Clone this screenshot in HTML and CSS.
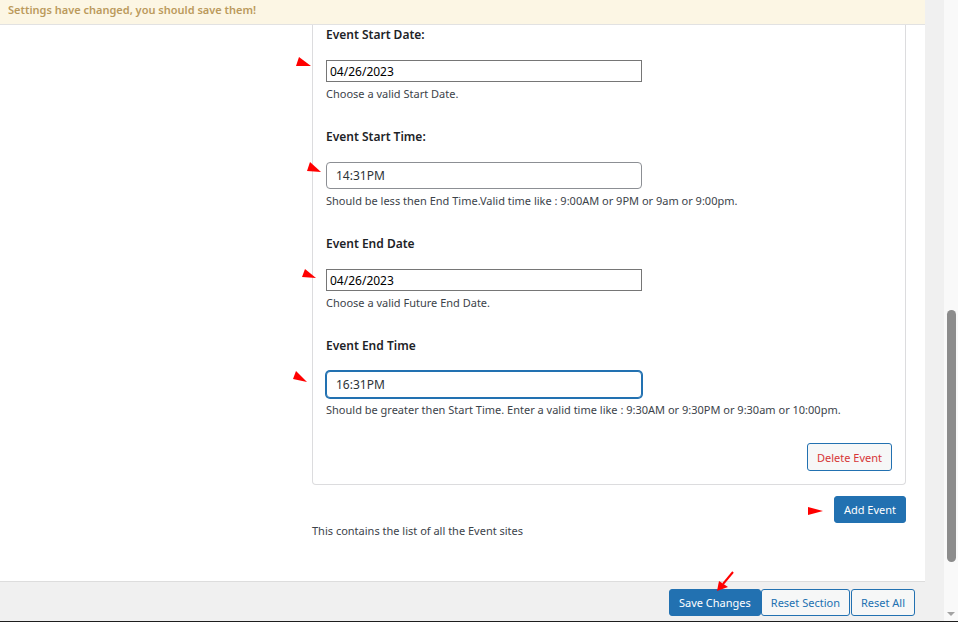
FILE: index.html
```html
<!DOCTYPE html>
<html lang="en">
<head>
<meta charset="utf-8">
<title>Event Settings</title>
<link rel="stylesheet" href="styles.css">
</head>
<body>
<div class="app">
  <div class="page">
    <div class="notice">Settings have changed, you should save them!</div>
    <div class="content">
      <div class="panel">
        <div class="field">
          <label class="label">Event Start Date:</label>
          <input class="input input-plain" type="text" value="04/26/2023">
          <p class="desc">Choose a valid Start Date.</p>
        </div>
        <div class="field">
          <label class="label">Event Start Time:</label>
          <input class="input input-wp" type="text" value="14:31PM">
          <p class="desc">Should be less then End Time.Valid time like : 9:00AM or 9PM or 9am or 9:00pm.</p>
        </div>
        <div class="field">
          <label class="label">Event End Date</label>
          <input class="input input-plain" type="text" value="04/26/2023">
          <p class="desc">Choose a valid Future End Date.</p>
        </div>
        <div class="field">
          <label class="label">Event End Time</label>
          <input class="input input-wp input-focus" type="text" value="16:31PM">
          <p class="desc">Should be greater then Start Time. Enter a valid time like : 9:30AM or 9:30PM or 9:30am or 10:00pm.</p>
        </div>
        <div class="panel-actions">
          <button class="btn btn-delete" type="button">Delete Event</button>
        </div>
      </div>
      <div class="add-row">
        <button class="btn btn-primary" type="button">Add Event</button>
      </div>
      <p class="list-desc">This contains the list of all the Event sites</p>
    </div>
    <div class="footer">
      <button class="btn btn-primary" type="button">Save Changes</button>
      <button class="btn btn-secondary" type="button">Reset Section</button>
      <button class="btn btn-secondary btn-gap" type="button">Reset All</button>
    </div>
  </div>
  <div class="gutter"></div>
  <div class="scrollbar">
    <div class="thumb"></div>
    <div class="scroll-arrow"></div>
  </div>
  <svg class="annotations" width="958" height="622" viewBox="0 0 958 622" aria-hidden="true">
    <polygon points="299,57 296,66 311,66" fill="#ff0000"/>
    <polygon points="310,162 307,171 321,172" fill="#ff0000"/>
    <polygon points="305,269 302,277 316,278" fill="#ff0000"/>
    <polygon points="296,371 293,379 307,382" fill="#ff0000"/>
    <polygon points="808,507 808,515 823,511" fill="#ff0000"/>
    <line x1="733" y1="572" x2="723" y2="584" stroke="#ff0000" stroke-width="2"/>
    <polygon points="717,591 719,581 728,587" fill="#ff0000"/>
  </svg>
</div>
</body>
</html>
```

FILE: styles.css
```css
* { box-sizing: border-box; }

html, body {
  margin: 0;
  padding: 0;
}

body {
  font-family: "Noto Sans", "Open Sans", sans-serif;
  font-size: 11px;
  color: #3c434a;
  background: #ffffff;
}

.app {
  position: relative;
  display: flex;
  width: 958px;
  height: 622px;
  overflow: hidden;
  border-bottom: 1px solid #1d1d1d;
}

.page {
  width: 925px;
  display: flex;
  flex-direction: column;
  background: #ffffff;
}

.notice {
  height: 25px;
  padding: 0 8px;
  background: #fcf6e4;
  border-bottom: 1px solid #e2e2e2;
  color: #bb9a5c;
  font-weight: 600;
  font-size: 11px;
  line-height: 19px;
}

.content {
  flex: 1;
  padding: 0 19px 0 312px;
}

.panel {
  border: 1px solid #dcdcde;
  border-top: none;
  border-radius: 0 0 4px 4px;
  padding: 0 13px 13px 13px;
}

.field {
  display: flex;
  flex-direction: column;
  align-items: flex-start;
  margin-bottom: 25px;
}

.label {
  display: block;
  font-weight: 600;
  color: #1d2327;
  font-size: 12px;
  line-height: 20px;
}

.input {
  margin: 15px 0 0 0;
  width: 316px;
  font-family: "Noto Sans", "Open Sans", sans-serif;
  font-size: 12px;
  color: #2c3338;
  background: #ffffff;
  outline: none;
}

.input-plain {
  height: 22px;
  padding: 0 3px;
  border: 1px solid #767676;
  border-radius: 0;
  color: #000000;
}

.input-wp {
  height: 27px;
  padding: 0 9px;
  border: 1px solid #8c8f94;
  border-radius: 4px;
}

.input-focus {
  border-color: #2271b1;
  box-shadow: 0 0 0 1px #2271b1;
}

.desc {
  margin: 4px 0 0 0;
  line-height: 16px;
}

.panel-actions {
  display: flex;
  justify-content: flex-end;
}

.btn {
  font-family: "Noto Sans", "Open Sans", sans-serif;
  font-size: 11px;
  height: 27px;
  padding: 0 9px;
  border-radius: 3px;
  border: 1px solid #2271b1;
  cursor: pointer;
  line-height: 25px;
}

.btn-delete {
  height: 28px;
  background: #f6f7f7;
  color: #d63638;
}

.btn-primary {
  background: #2271b1;
  color: #ffffff;
}

.btn-secondary {
  background: #f6f7f7;
  color: #2271b1;
}

.add-row {
  display: flex;
  justify-content: flex-end;
  margin-top: 11px;
}

.list-desc {
  margin: 0;
  line-height: 16px;
}

.footer {
  height: 40px;
  display: flex;
  justify-content: flex-end;
  align-items: flex-start;
  padding: 7px 10px 0 0;
  background: #f0f0f0;
  border-top: 1px solid #dddddd;
}

.btn-gap {
  margin-left: 1px;
}

.gutter {
  width: 19px;
  background: #f0f0f0;
}

.scrollbar {
  width: 14px;
  background: #f9f9f9;
  display: flex;
  flex-direction: column;
  align-items: center;
  padding-top: 310px;
}

.thumb {
  width: 9px;
  height: 252px;
  background: #8c8c8c;
  border-radius: 5px;
}

.scroll-arrow {
  margin-top: 50px;
  width: 0;
  height: 0;
  border-left: 4px solid transparent;
  border-right: 4px solid transparent;
  border-top: 4px solid #a3a3a3;
}

.annotations {
  position: absolute;
  left: 0;
  top: 0;
  pointer-events: none;
}
```
